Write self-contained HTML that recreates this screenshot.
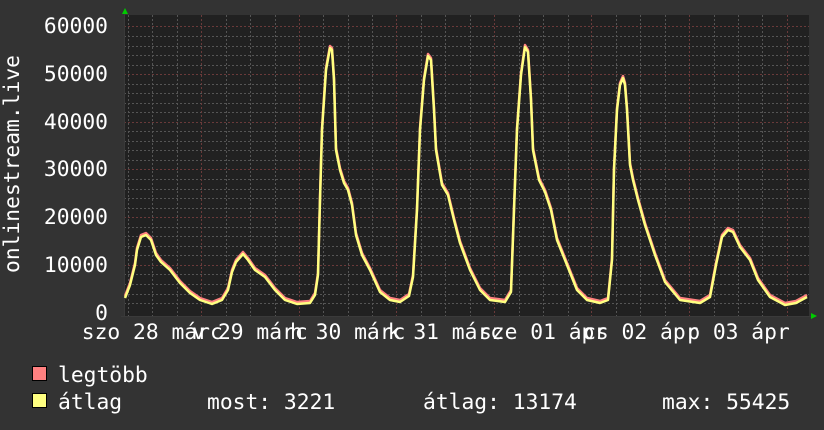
<!DOCTYPE html>
<html><head><meta charset="utf-8"><style>
html,body{margin:0;padding:0;background:#333333;}
svg{display:block;}
text{font-family:"DejaVu Sans Mono","Liberation Mono",monospace;font-size:21.3px;fill:#ffffff;}
</style></head><body>
<svg width="824" height="430" viewBox="0 0 824 430" xmlns="http://www.w3.org/2000/svg">
<rect width="824" height="430" fill="#333333"/>
<rect x="124" y="15" width="685" height="301" fill="#212121"/>
<g stroke="#555555" stroke-width="1" stroke-dasharray="2,2">
<path d="M128.5 15V316M152.5 15V316M177.5 15V316M226.5 15V316M250.5 15V316M275.5 15V316M323.5 15V316M348.5 15V316M372.5 15V316M421.5 15V316M445.5 15V316M470.5 15V316M519.5 15V316M543.5 15V316M568.5 15V316M616.5 15V316M640.5 15V316M665.5 15V316M714.5 15V316M738.5 15V316M762.5 15V316"/>
<path d="M124 303.5H809M124 294.5H809M124 284.5H809M124 274.5H809M124 255.5H809M124 246.5H809M124 236.5H809M124 227.5H809M124 208.5H809M124 198.5H809M124 189.5H809M124 179.5H809M124 160.5H809M124 150.5H809M124 141.5H809M124 131.5H809M124 112.5H809M124 103.5H809M124 93.5H809M124 84.5H809M124 65.5H809M124 55.5H809M124 46.5H809M124 36.5H809"/>
</g>
<g stroke="#6a3a3a" stroke-width="1" stroke-dasharray="2,2">
<path d="M201.5 15V316M299.5 15V316M396.5 15V316M494.5 15V316M591.5 15V316M689.5 15V316M787.5 15V316"/>
<path d="M124 265.5H809M124 217.5H809M124 169.5H809M124 122.5H809M124 74.5H809M124 26.5H809"/>
</g>
<path d="M124.5 12V316M121 316.5H812" stroke="#3a3a3a" stroke-width="1"/>
<polygon points="122,14 128,14 125,8" fill="#00cc00"/>
<polygon points="811,313 811,319 817,316" fill="#00cc00"/>
<g fill="none" stroke-linejoin="round" stroke-width="2.5">
<polyline stroke="#ff8080" transform="translate(0,-2)" points="125,298 130,285 135,265 137,250 141,237 146,235 151,240 156,255 161,262 170,270 180,283 190,293 200,300 212,304 222,300 228,290 232,272 236,262 243,254 248,260 255,270 265,277 275,290 285,300 297,304 310,303 315,295 318,275 320,200 322,130 326,70 330,48 332,50 334,80 336,150 340,170 344,183 348,190 352,205 356,235 362,255 370,270 380,292 390,300 400,302 409,296 413,277 417,210 420,130 424,80 428,56 431,60 434,110 436,150 442,185 448,195 454,220 460,243 470,270 480,290 490,300 505,302 511,292 514,210 517,130 521,75 525,47 528,52 531,100 533,150 539,180 545,192 551,210 557,240 567,265 577,290 587,300 600,303 608,300 612,260 614,170 617,110 620,85 623,78 625,85 627,110 630,165 633,180 638,200 645,225 655,255 665,282 680,300 700,303 710,297 716,265 722,237 728,230 733,232 740,247 750,260 758,280 770,297 785,305 796,303 807,297"/>
<polyline stroke="#ffff80" points="125,298 130,285 135,265 137,250 141,237 146,235 151,240 156,255 161,262 170,270 180,283 190,293 200,300 212,304 222,300 228,290 232,272 236,262 243,254 248,260 255,270 265,277 275,290 285,300 297,304 310,303 315,295 318,275 320,200 322,130 326,70 330,48 332,50 334,80 336,150 340,170 344,183 348,190 352,205 356,235 362,255 370,270 380,292 390,300 400,302 409,296 413,277 417,210 420,130 424,80 428,56 431,60 434,110 436,150 442,185 448,195 454,220 460,243 470,270 480,290 490,300 505,302 511,292 514,210 517,130 521,75 525,47 528,52 531,100 533,150 539,180 545,192 551,210 557,240 567,265 577,290 587,300 600,303 608,300 612,260 614,170 617,110 620,85 623,78 625,85 627,110 630,165 633,180 638,200 645,225 655,255 665,282 680,300 700,303 710,297 716,265 722,237 728,230 733,232 740,247 750,260 758,280 770,297 785,305 796,303 807,297"/>
</g>
<g text-anchor="end">
<text x="108" y="33">60000</text>
<text x="108" y="81">50000</text>
<text x="108" y="129">40000</text>
<text x="108" y="176">30000</text>
<text x="108" y="224">20000</text>
<text x="108" y="272">10000</text>
<text x="108" y="320">0</text>
</g>
<text transform="translate(19,164) rotate(-90)" text-anchor="middle">onlinestream.live</text>
<g text-anchor="middle">
<text x="152.3" y="339">szo 28 márc</text>
<text x="250" y="339">v 29 márc</text>
<text x="347.7" y="339">h 30 márc</text>
<text x="445.4" y="339">k 31 márc</text>
<text x="543.1" y="339">sze 01 ápr</text>
<text x="640.8" y="339">cs 02 ápr</text>
<text x="738.5" y="339">p 03 ápr</text>
</g>
<rect x="32.5" y="366.5" width="14" height="14" fill="#ff8080" stroke="#000"/>
<rect x="32.5" y="393.5" width="14" height="14" fill="#ffff80" stroke="#000"/>
<text x="58" y="382">legtöbb</text>
<text x="58" y="409">átlag</text>
<text x="207" y="409">most: 3221</text>
<text x="423" y="409">átlag: 13174</text>
<text x="662" y="409">max: 55425</text>
</svg>
</body></html>
